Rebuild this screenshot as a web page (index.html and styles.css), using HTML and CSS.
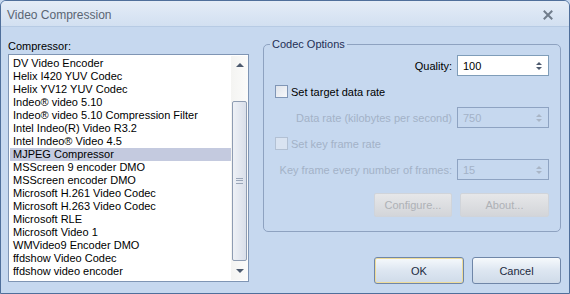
FILE: index.html
```html
<!DOCTYPE html>
<html lang="en">
<head>
    <meta charset="UTF-8">
    <meta name="viewport" content="width=device-width, initial-scale=1.0">
    <title>Video Compression</title>
    <link rel="stylesheet" href="styles.css">
</head>
<body>
    <div class="window">
        <div class="titlebar">
            <span class="title">Video Compression</span>
            <svg class="close" width="10" height="10" viewBox="0 0 10 10">
                <path d="M1.5 1.5 L8.5 8.5 M8.5 1.5 L1.5 8.5" stroke="#707c8b" stroke-width="2" stroke-linecap="square"/>
            </svg>
        </div>
        <div class="body">
            <div class="left">
                <label class="list-label">Compressor:</label>
                <div class="listbox">
                    <ul class="items">
                        <li>DV Video Encoder</li>
                        <li>Helix I420 YUV Codec</li>
                        <li>Helix YV12 YUV Codec</li>
                        <li>Indeo® video 5.10</li>
                        <li>Indeo® video 5.10 Compression Filter</li>
                        <li>Intel Indeo(R) Video R3.2</li>
                        <li>Intel Indeo® Video 4.5</li>
                        <li class="selected">MJPEG Compressor</li>
                        <li>MSScreen 9 encoder DMO</li>
                        <li>MSScreen encoder DMO</li>
                        <li>Microsoft H.261 Video Codec</li>
                        <li>Microsoft H.263 Video Codec</li>
                        <li>Microsoft RLE</li>
                        <li>Microsoft Video 1</li>
                        <li>WMVideo9 Encoder DMO</li>
                        <li>ffdshow Video Codec</li>
                        <li>ffdshow video encoder</li>
                    </ul>
                    <div class="scrollbar">
                        <div class="arrow"><span class="tri up"></span></div>
                        <div class="track">
                            <div class="thumb"><span class="grip"></span></div>
                        </div>
                        <div class="arrow"><span class="tri down"></span></div>
                    </div>
                </div>
            </div>

            <div class="right">
                <fieldset class="group">
                    <legend>Codec Options</legend>

                    <div class="field-row">
                        <span class="field-label">Quality:</span>
                        <div class="spin">
                            <span class="spin-value">100</span>
                            <span class="spin-arrows"><span class="tri up small"></span><span class="tri down small"></span></span>
                        </div>
                    </div>

                    <div class="check-row">
                        <span class="check"></span>
                        <span>Set target data rate</span>
                    </div>

                    <div class="field-row disabled">
                        <span class="field-label">Data rate (kilobytes per second)</span>
                        <div class="spin">
                            <span class="spin-value">750</span>
                            <span class="spin-arrows"><span class="tri up small"></span><span class="tri down small"></span></span>
                        </div>
                    </div>

                    <div class="check-row disabled">
                        <span class="check"></span>
                        <span>Set key frame rate</span>
                    </div>

                    <div class="field-row disabled">
                        <span class="field-label">Key frame every number of frames:</span>
                        <div class="spin">
                            <span class="spin-value">15</span>
                            <span class="spin-arrows"><span class="tri up small"></span><span class="tri down small"></span></span>
                        </div>
                    </div>

                    <div class="group-buttons">
                        <button class="flat configure" disabled>Configure...</button>
                        <button class="flat about" disabled>About...</button>
                    </div>
                </fieldset>

                <div class="actions">
                    <button class="btn default">OK</button>
                    <button class="btn cancel">Cancel</button>
                </div>
            </div>
        </div>
    </div>
</body>
</html>
```

FILE: styles.css
```css
* {
    box-sizing: border-box;
}

body {
    margin: 0;
    padding: 0;
    font-family: "Liberation Sans", Arial, sans-serif;
    font-size: 11px;
    color: #000000;
    background-color: #c6d8ef;
}

.window {
    width: 570px;
    height: 294px;
    border: 1px solid #4f6f9b;
    border-radius: 6px 6px 0 0;
    background-color: #c6d8ef;
    overflow: hidden;
}

.titlebar {
    height: 26px;
    display: flex;
    align-items: center;
    justify-content: space-between;
    padding: 2px 16px 0 6px;
    background: linear-gradient(#e4ecf7, #d2e0f1);
    border-bottom: 1px solid #b7cbe4;
}

.title {
    font-size: 12px;
    color: #5a6573;
}

.body {
    display: flex;
    padding: 11px 8px 0 7px;
}

/* left: compressor list */

.left {
    width: 241px;
    flex-shrink: 0;
}

.list-label {
    display: block;
    margin-top: 2px;
    line-height: 13px;
    height: 14px;
}

.listbox {
    display: flex;
    height: 228px;
    border: 1px solid #7f95b4;
    background-color: #ffffff;
    padding: 1px 0 1px 1px;
}

.items {
    flex: 1;
    list-style: none;
    margin: 0;
    padding: 1px 0 0 0;
}

.items li {
    height: 13px;
    line-height: 13px;
    padding-left: 3px;
    white-space: nowrap;
}

.items li.selected {
    background-color: #c4cadf;
}

.scrollbar {
    width: 17px;
    display: flex;
    flex-direction: column;
    background: linear-gradient(90deg, #f4f4f2, #fbfbfa);
}

.arrow {
    height: 18px;
    display: flex;
    align-items: center;
    justify-content: center;
}

.track {
    flex: 1;
    padding: 27px 1px 2px 1px;
}

.thumb {
    height: 160px;
    border: 1px solid #8e9cb2;
    border-radius: 2px;
    background: linear-gradient(90deg, #eef1f6, #d9dfea);
    display: flex;
    align-items: center;
    justify-content: center;
}

.grip {
    width: 7px;
    height: 6px;
    border-top: 1px solid #9aa6b8;
    border-bottom: 1px solid #9aa6b8;
}

.grip::after {
    content: "";
    display: block;
    margin-top: 1.5px;
    border-top: 1px solid #9aa6b8;
}

.tri {
    width: 0;
    height: 0;
    border-left: 4px solid transparent;
    border-right: 4px solid transparent;
}

.tri.up {
    border-bottom: 4px solid #4d5a6e;
}

.tri.down {
    border-top: 4px solid #4d5a6e;
}

.tri.small {
    border-left-width: 3px;
    border-right-width: 3px;
}

.tri.small.up {
    border-bottom-width: 3px;
}

.tri.small.down {
    border-top-width: 3px;
}

/* right: codec options */

.right {
    margin-left: 14px;
    width: 299px;
    display: flex;
    flex-direction: column;
}

.group {
    margin: 0;
    height: 194px;
    border: 1px solid #8ea2c0;
    border-radius: 5px;
    padding: 0 11px 0 11px;
    display: flex;
    flex-direction: column;
    gap: 9px;
}

.group legend {
    padding: 0 2px;
    margin-left: -5px;
    line-height: 13px;
    color: #1f2f55;
}

.field-row {
    display: flex;
    justify-content: flex-end;
    align-items: center;
    gap: 5px;
    height: 21px;
}

.group .field-row:first-of-type {
    margin-top: 4px;
}

.spin {
    width: 92px;
    height: 21px;
    border: 1px solid #7f9db9;
    background-color: #ffffff;
    display: flex;
    align-items: center;
    justify-content: space-between;
    padding: 0 6px 0 5px;
}

.spin-arrows {
    display: flex;
    flex-direction: column;
    gap: 2px;
}

.check-row {
    display: flex;
    align-items: center;
    gap: 3px;
    height: 13px;
}

.check {
    width: 13px;
    height: 13px;
    border: 1px solid #8096b6;
    background: linear-gradient(135deg, #dfe4ec, #f7f8fa);
}

.disabled {
    color: #a3b2c7;
}

.disabled .spin {
    background-color: #c6d8ef;
    border-color: #8ea3c2;
}

.disabled .tri.up {
    border-bottom-color: #a9b5c6;
}

.disabled .tri.down {
    border-top-color: #a9b5c6;
}

.check-row.disabled .check {
    border-color: #b2c0d3;
    background: #d9e3f1;
}

.group-buttons {
    display: flex;
    justify-content: flex-end;
    gap: 8px;
    margin-top: 4px;
}

button {
    font-family: "Liberation Sans", Arial, sans-serif;
    font-size: 11px;
    padding: 0;
}

.flat {
    height: 24px;
    border: 1px solid #d0d4da;
    border-radius: 2px;
    background: linear-gradient(#e6e7e9, #d3d5d9);
    color: #aeb1b6;
}

.configure {
    width: 78px;
}

.about {
    width: 89px;
}

.actions {
    display: flex;
    justify-content: flex-end;
    gap: 8px;
    margin-top: 25px;
}

.btn {
    height: 27px;
    border: 1px solid #6f86a8;
    border-radius: 3px;
    background: linear-gradient(#f6f9fc, #dde6f1 50%, #cfdbe9);
    color: #1c2a3e;
}

.btn.default {
    width: 90px;
    box-shadow: inset 0 0 0 1px #efdc98;
}

.btn.cancel {
    width: 89px;
}
```
